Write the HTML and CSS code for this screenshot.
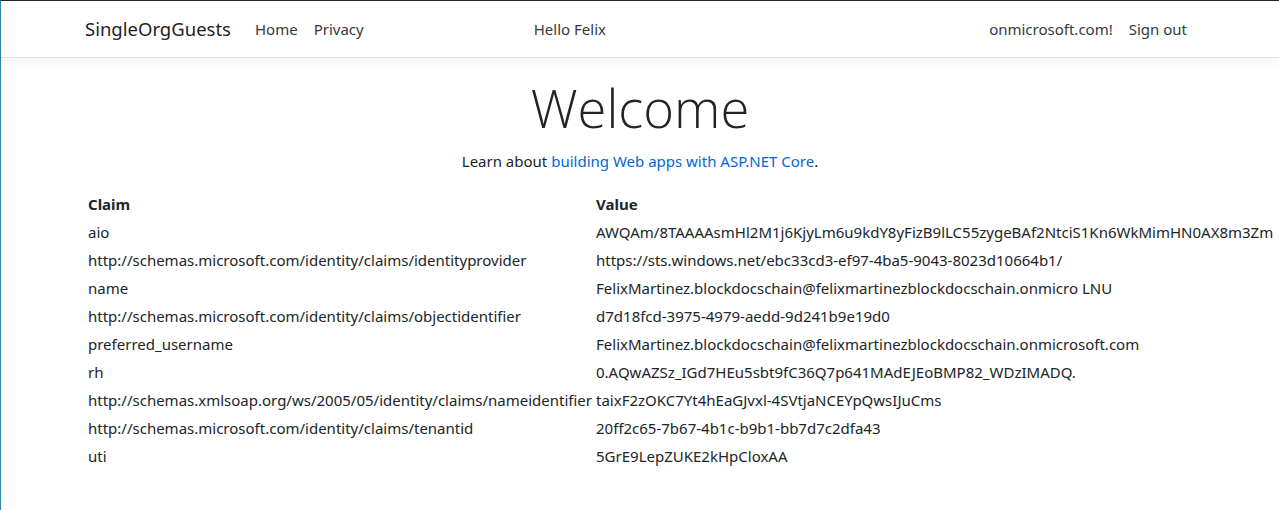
FILE: index.html
```html
<!DOCTYPE html>
<html lang="en">
<head>
<meta charset="utf-8">
<title>Home Page - SingleOrgGuests</title>
<link rel="stylesheet" href="styles.css">
</head>
<body>
<div class="frame">
  <header>
    <nav class="navbar">
      <div class="container nav-inner">
        <a class="brand" href="#">SingleOrgGuests</a>
        <ul class="nav-list nav-main">
          <li><a class="nav-link" href="#">Home</a></li>
          <li><a class="nav-link" href="#">Privacy</a></li>
        </ul>
        <ul class="nav-list nav-account">
          <li class="greeting"><span>Hello Felix</span><span>onmicrosoft.com!</span></li>
          <li><a class="nav-link" href="#">Sign out</a></li>
        </ul>
      </div>
    </nav>
  </header>
  <div class="container">
    <main class="main">
      <div class="intro">
        <h1 class="display">Welcome</h1>
        <p class="lead-text">Learn about <a href="#">building Web apps with ASP.NET Core</a>.</p>
      </div>
      <table class="claims">
        <thead>
          <tr><th>Claim</th><th>Value</th></tr>
        </thead>
        <tbody>
          <tr><td>aio</td><td>AWQAm/8TAAAAsmHl2M1j6KjyLm6u9kdY8yFizB9lLC55zygeBAf2NtciS1Kn6WkMimHN0AX8m3Zm</td></tr>
          <tr><td>http://schemas.microsoft.com/identity/claims/identityprovider</td><td>https://sts.windows.net/ebc33cd3-ef97-4ba5-9043-8023d10664b1/</td></tr>
          <tr><td>name</td><td>FelixMartinez.blockdocschain@felixmartinezblockdocschain.onmicro LNU</td></tr>
          <tr><td>http://schemas.microsoft.com/identity/claims/objectidentifier</td><td>d7d18fcd-3975-4979-aedd-9d241b9e19d0</td></tr>
          <tr><td>preferred_username</td><td>FelixMartinez.blockdocschain@felixmartinezblockdocschain.onmicrosoft.com</td></tr>
          <tr><td>rh</td><td>0.AQwAZSz_IGd7HEu5sbt9fC36Q7p641MAdEJEoBMP82_WDzIMADQ.</td></tr>
          <tr><td>http://schemas.xmlsoap.org/ws/2005/05/identity/claims/nameidentifier</td><td>taixF2zOKC7Yt4hEaGJvxl-4SVtjaNCEYpQwsIJuCms</td></tr>
          <tr><td>http://schemas.microsoft.com/identity/claims/tenantid</td><td>20ff2c65-7b67-4b1c-b9b1-bb7d7c2dfa43</td></tr>
          <tr><td>uti</td><td>5GrE9LepZUKE2kHpCloxAA</td></tr>
        </tbody>
      </table>
    </main>
  </div>
</div>
</body>
</html>
```

FILE: styles.css
```css
*,
*::before,
*::after {
  box-sizing: border-box;
}

html {
  font-size: 16px;
}

body {
  margin: 0;
  font-family: "Noto Sans", "Open Sans", "DejaVu Sans", sans-serif;
  font-size: 15px;
  line-height: 24px;
  color: #212529;
  background: #fff;
  overflow: hidden;
}

.frame {
  border-top: 1px solid #2b2131;
  border-left: 1px solid #2f8aae;
  min-height: 510px;
}

a {
  color: #0366d6;
  text-decoration: none;
}

.container {
  max-width: 1140px;
  margin: 0 auto;
  padding: 0 15px;
}

.navbar {
  padding: 8px 16px;
  border-bottom: 1px solid #dee2e6;
  box-shadow: 0 4px 12px rgba(0, 0, 0, 0.05);
  margin-bottom: 16px;
  background: #fff;
}

.nav-inner {
  display: flex;
  align-items: center;
}

.brand {
  font-size: 18.5px;
  line-height: 30px;
  padding: 5px 0;
  margin-right: 16px;
  color: rgba(0, 0, 0, 0.9);
  white-space: nowrap;
}

.nav-list {
  display: flex;
  list-style: none;
  margin: 0;
  padding: 0;
}

.nav-main {
  flex-grow: 1;
}

.nav-link {
  display: block;
  padding: 8px;
  color: #343a40;
}

.greeting {
  display: flex;
  justify-content: space-between;
  width: 579px;
  padding: 8px 0;
  margin-right: 8px;
  color: #343a40;
}

.intro {
  text-align: center;
}

.display {
  font-family: "Open Sans", "Noto Sans", sans-serif;
  font-size: 52.5px;
  font-weight: 300;
  line-height: 67px;
  margin: 0 0 8px;
}

.lead-text {
  margin: 0 0 16px;
}

.claims {
  border-collapse: separate;
  border-spacing: 2px;
}

.claims th,
.claims td {
  padding: 1px;
  text-align: left;
  white-space: nowrap;
  vertical-align: top;
}

.claims th {
  font-weight: 700;
}
```
